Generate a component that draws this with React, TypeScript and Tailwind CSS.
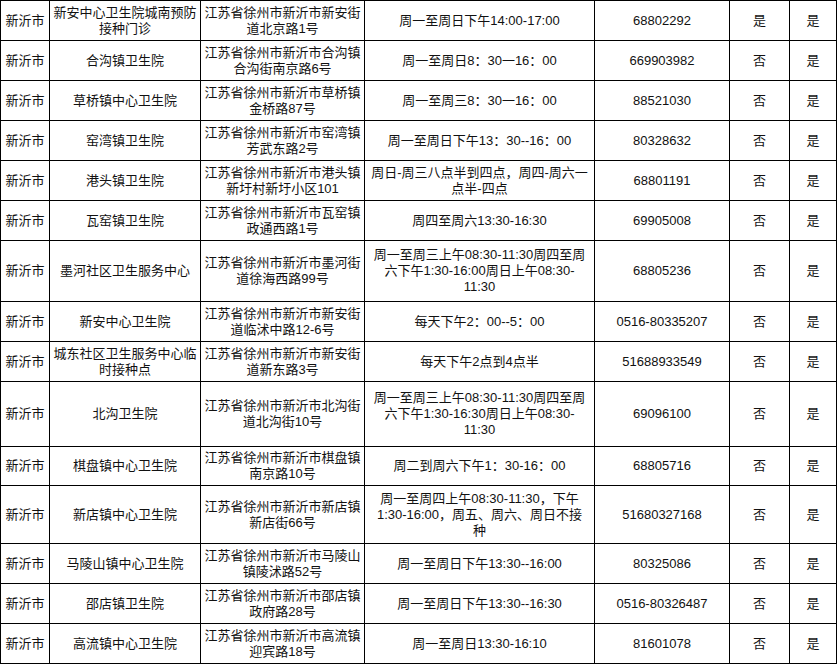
import React from "react";

type Row = {
  h: number;
  name: string[];
  addr: string[];
  time: string[];
  phone: string;
  a: string;
  b: string;
};

const rows: Row[] = [
  { h: 39, name: ["新安中心卫生院城南预防", "接种门诊"], addr: ["江苏省徐州市新沂市新安街", "道北京路1号"], time: ["周一至周日下午14:00-17:00"], phone: "68802292", a: "是", b: "是" },
  { h: 39, name: ["合沟镇卫生院"], addr: ["江苏省徐州市新沂市合沟镇", "合沟街南京路6号"], time: ["周一至周日8：30一16：00"], phone: "669903982", a: "否", b: "是" },
  { h: 39, name: ["草桥镇中心卫生院"], addr: ["江苏省徐州市新沂市草桥镇", "金桥路87号"], time: ["周一至周三8：30一16：00"], phone: "88521030", a: "否", b: "是" },
  { h: 39, name: ["窑湾镇卫生院"], addr: ["江苏省徐州市新沂市窑湾镇", "芳武东路2号"], time: ["周一至周日下午13：30--16：00"], phone: "80328632", a: "否", b: "是" },
  { h: 39, name: ["港头镇卫生院"], addr: ["江苏省徐州市新沂市港头镇", "新圩村新圩小区101"], time: ["周日-周三八点半到四点，周四-周六一", "点半-四点"], phone: "68801191", a: "否", b: "是" },
  { h: 39, name: ["瓦窑镇卫生院"], addr: ["江苏省徐州市新沂市瓦窑镇", "政通西路1号"], time: ["周四至周六13:30-16:30"], phone: "69905008", a: "否", b: "是" },
  { h: 60, name: ["墨河社区卫生服务中心"], addr: ["江苏省徐州市新沂市墨河街", "道徐海西路99号"], time: ["周一至周三上午08:30-11:30周四至周", "六下午1:30-16:00周日上午08:30-", "11:30"], phone: "68805236", a: "否", b: "是" },
  { h: 39, name: ["新安中心卫生院"], addr: ["江苏省徐州市新沂市新安街", "道临沭中路12-6号"], time: ["每天下午2：00--5：00"], phone: "0516-80335207", a: "否", b: "是" },
  { h: 39, name: ["城东社区卫生服务中心临", "时接种点"], addr: ["江苏省徐州市新沂市新安街", "道新东路3号"], time: ["每天下午2点到4点半"], phone: "51688933549", a: "否", b: "是" },
  { h: 64, name: ["北沟卫生院"], addr: ["江苏省徐州市新沂市北沟街", "道北沟街10号"], time: ["周一至周三上午08:30-11:30周四至周", "六下午1:30-16:30周日上午08:30-", "11:30"], phone: "69096100", a: "否", b: "是" },
  { h: 38, name: ["棋盘镇中心卫生院"], addr: ["江苏省徐州市新沂市棋盘镇", "南京路10号"], time: ["周二到周六下午1：30-16：00"], phone: "68805716", a: "否", b: "是" },
  { h: 57, name: ["新店镇中心卫生院"], addr: ["江苏省徐州市新沂市新店镇", "新店街66号"], time: ["周一至周四上午08:30-11:30，下午", "1:30-16:00，周五、周六、周日不接", "种"], phone: "51680327168", a: "否", b: "是" },
  { h: 39, name: ["马陵山镇中心卫生院"], addr: ["江苏省徐州市新沂市马陵山", "镇陵沭路52号"], time: ["周一至周日下午13:30--16:00"], phone: "80325086", a: "否", b: "是" },
  { h: 39, name: ["邵店镇卫生院"], addr: ["江苏省徐州市新沂市邵店镇", "政府路28号"], time: ["周一至周日下午13:30--16:30"], phone: "0516-80326487", a: "否", b: "是" },
  { h: 39, name: ["高流镇中心卫生院"], addr: ["江苏省徐州市新沂市高流镇", "迎宾路18号"], time: ["周一至周日13:30-16:10"], phone: "81601078", a: "否", b: "是" },
];

function Cell({ lines }: { lines: string[] }) {
  return (
    <div className="bg-white flex items-center justify-center text-center px-[1px] overflow-hidden">
      <div className="whitespace-nowrap">
        {lines.map((l, i) => (
          <div key={i} className="h-[16px] leading-[16px]">{l}</div>
        ))}
      </div>
    </div>
  );
}

export default function App() {
  return (
    <div
      className="w-[837px] h-[664px] bg-white text-[13px] leading-[16px] text-[#111]"
      style={{ fontFamily: '"Liberation Sans", "Noto Sans CJK SC", sans-serif' }}
    >
      <div className="w-[837px] bg-black p-px flex flex-col gap-px">
        {rows.map((r, i) => (
          <div
            key={i}
            className="grid grid-cols-[48px_150px_163px_229px_134px_59px_46px] gap-px"
            style={{ height: r.h }}
          >
            <Cell lines={["新沂市"]} />
            <Cell lines={r.name} />
            <Cell lines={r.addr} />
            <Cell lines={r.time} />
            <Cell lines={[r.phone]} />
            <Cell lines={[r.a]} />
            <Cell lines={[r.b]} />
          </div>
        ))}
      </div>
    </div>
  );
}
